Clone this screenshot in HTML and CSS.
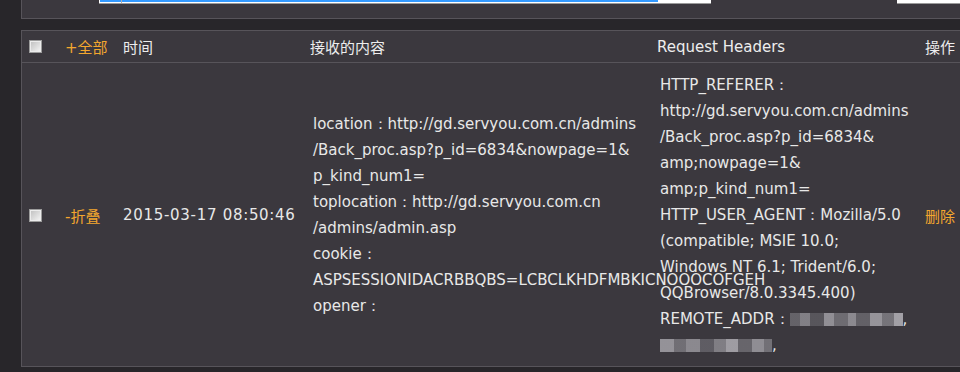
FILE: index.html
```html
<!DOCTYPE html>
<html lang="zh-CN">
<head>
    <meta charset="UTF-8">
    <meta name="viewport" content="width=device-width, initial-scale=1.0">
    <title>接收的内容</title>
    <link rel="stylesheet" href="styles.css">
</head>
<body>
    <!-- 搜索栏 -->
    <div class="toolbar">
        <div class="search"><span class="search-bar"></span><span class="caret"></span></div>
        <div class="search-btn"></div>
    </div>

    <!-- 列表 -->
    <div class="panel">
        <table class="list">
            <colgroup>
                <col class="c-check">
                <col class="c-toggle">
                <col class="c-time">
                <col class="c-content">
                <col class="c-headers">
                <col class="c-op">
            </colgroup>
            <thead>
                <tr>
                    <th class="check"><input type="checkbox"></th>
                    <th><a class="link">+全部</a></th>
                    <th>时间</th>
                    <th>接收的内容</th>
                    <th>Request Headers</th>
                    <th>操作</th>
                </tr>
            </thead>
            <tbody>
                <tr>
                    <td class="check"><input type="checkbox"></td>
                    <td><a class="link">-折叠</a></td>
                    <td class="time">2015-03-17 08:50:46</td>
                    <td><div class="lines content" lang="en">
                        location：http://gd.servyou.com.cn/admins<br>
                        /Back_proc.asp?p_id=6834&amp;nowpage=1&amp;<br>
                        p_kind_num1=<br>
                        toplocation：http://gd.servyou.com.cn<br>
                        /admins/admin.asp<br>
                        cookie：<br>
                        ASPSESSIONIDACRBBQBS=LCBCLKHDFMBKICNOOOCOFGEH<br>
                        opener：
                    </div></td>
                    <td><div class="lines headers" lang="en">
                        HTTP_REFERER：<br>
                        http://gd.servyou.com.cn/admins<br>
                        /Back_proc.asp?p_id=6834&amp;<br>
                        amp;nowpage=1&amp;<br>
                        amp;p_kind_num1=<br>
                        HTTP_USER_AGENT：Mozilla/5.0<br>
                        (compatible; MSIE 10.0;<br>
                        Windows NT 6.1; Trident/6.0;<br>
                        QQBrowser/8.0.3345.400)<br>
                        REMOTE_ADDR：<span class="blur ip1"></span>,<br>
                        <span class="blur ip2"></span>,
                    </div></td>
                    <td><a class="link">删除</a></td>
                </tr>
            </tbody>
        </table>
    </div>
</body>
</html>
```

FILE: styles.css
```css
html, body {
    margin: 0;
    overflow: hidden;
}
body {
    background-color: #28262a;
    padding-left: 21px;
    font-family: "DejaVu Sans", "Noto Sans CJK SC", sans-serif;
    font-size: 15px;
    color: #e8e8e8;
}

/* 顶部搜索栏 */
.toolbar {
    position: relative;
    height: 18px;
    width: 960px;
    background-color: #3b383e;
    border-left: 1px solid #57545a;
    border-bottom: 1px solid #57545a;
}
.search {
    position: absolute;
    left: 77px;
    top: 0;
    width: 612px;
    height: 3px;
    background-color: #fff;
    border-bottom: 1px solid #9a9a9a;
}
.search-bar {
    position: absolute;
    left: 1px;
    top: 0;
    width: 558px;
    height: 2px;
    background-color: #3399ff;
}
.caret {
    position: absolute;
    left: 22px;
    top: 0;
    width: 1px;
    height: 3px;
    background-color: #b0b0b0;
}
.search-btn {
    position: absolute;
    left: 875px;
    top: 0;
    width: 70px;
    height: 3px;
    background-color: #fff;
    border-bottom: 1px solid #9a9a9a;
}

/* 列表 */
.panel {
    margin-top: 11px;
    width: 960px;
    background-color: #3b383e;
    border-left: 1px solid #57545a;
    border-top: 1px solid #57545a;
}
.list {
    width: 960px;
    border-collapse: collapse;
    table-layout: fixed;
}
.c-check { width: 35px; }
.c-toggle { width: 58px; }
.c-time { width: 187px; }
.c-content { width: 347px; }
.c-headers { width: 268px; }
.list th, .list td {
    padding: 0 0 0 8px;
    text-align: left;
    font-weight: normal;
    vertical-align: middle;
    white-space: nowrap;
    border-bottom: 1px solid #57545a;
}
.list th {
    height: 31px;
    color: #ededed;
}
.list td {
    padding-top: 9px;
    padding-bottom: 8px;
}
.list .check {
    padding-left: 7px;
}
.list .time {
    letter-spacing: 0.7px;
}
.lines {
    font-family: "DejaVu Sans", sans-serif;
    line-height: 26px;
    padding-left: 3px;
}
.link {
    color: #f3a72e;
    cursor: pointer;
}
input[type=checkbox] {
    appearance: none;
    display: block;
    margin: 0;
    width: 13px;
    height: 13px;
    border: 1px solid #9c9c9c;
    box-shadow: inset 0 0 0 1px #ececec;
    background: linear-gradient(135deg, #bdbdbd, #f6f6f6);
}

/* 打码的IP */
.blur {
    display: inline-block;
    height: 13px;
    vertical-align: -2px;
    opacity: 0.85;
}
.ip1 {
    width: 113px;
    background: linear-gradient(90deg, #6c6a70 0 10px, #8e8c92 10px 20px, #5d5b61 20px 34px, #a09ea4 34px 44px, #77757b 44px 58px, #9a989e 58px 66px, #6a686e 66px 80px, #a6a4aa 80px 92px, #807e84 92px 104px, #b4b2b8 104px 113px);
}
.ip2 {
    width: 112px;
    background: linear-gradient(90deg, #a4a2a8 0 14px, #7a787e 14px 26px, #99979d 26px 40px, #65636a 40px 54px, #8c8a90 54px 66px, #b0aeb4 66px 78px, #6f6d73 78px 92px, #9e9ca2 92px 104px, #7c7a80 104px 112px);
}
```
